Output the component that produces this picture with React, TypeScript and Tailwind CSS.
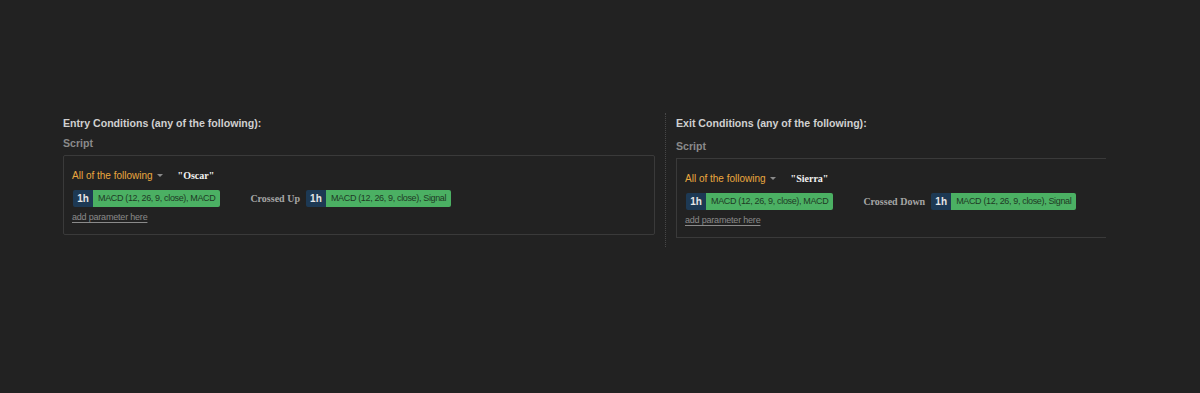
import React from "react"

type Side = {
  title: string
  name: string
  cross: string
  shift: boolean
  open: boolean
}

const Tag = ({ label }: { label: string }) => {
  return (
    <div className="flex h-[17px] items-stretch">
      <span className="flex w-[20px] items-center justify-center rounded-l-[2px] bg-[#1d3954] text-[10px] font-bold text-[#e6e6e6]">1h</span>
      <span className="flex items-center rounded-r-[2px] bg-[#4bb063] px-[5px] text-[9px] tracking-[-0.35px] text-[#1f3a25]">{label}</span>
    </div>
  )
}

const Conditions = ({ side }: { side: Side }) => {
  return (
    <div className={side.open ? "w-[430px]" : "w-[592px]"}>
      <div className="h-[14px] text-[10.6px] font-bold leading-[14px] text-[#d0d0d0]">{side.title}</div>
      <div className={"h-[14px] text-[10.6px] font-bold leading-[14px] text-[#8a8a8a] " + (side.shift ? "mt-[9px]" : "mt-[6px]")}>Script</div>
      <div className={"mt-[5px] border-[#3a3a3a] px-[8px] pb-[11px] pt-[12px] " + (side.open ? "border-y border-l" : "border rounded-[2px]")}>
        <div className="flex h-[14px] items-center">
          <span className="text-[10px] text-[#eaa83f]">All of the following</span>
          <span className="ml-[4px] mt-[1px] h-0 w-0 border-x-[3px] border-t-[3px] border-x-transparent border-t-[#8a8a8a]" />
          <span className="ml-[15px] font-['Liberation_Serif'] text-[10px] font-bold text-[#f2f2f2]">"{side.name}"</span>
        </div>
        <div className="ml-[1px] mt-[8px] flex items-center">
          <Tag label="MACD (12, 26, 9, close), MACD" />
          <span className="ml-[30px] font-['Liberation_Serif'] text-[10px] font-bold text-[#a6a6a6]">{side.cross}</span>
          <div className="ml-[6px]">
            <Tag label="MACD (12, 26, 9, close), Signal" />
          </div>
        </div>
        <div className="mt-[4px] h-[12px] text-[9px] leading-[12px] tracking-[-0.2px] text-[#8a8a8a] underline underline-offset-2">add parameter here</div>
      </div>
    </div>
  )
}

export default function App() {
  const entry: Side = { title: "Entry Conditions (any of the following):", name: "Oscar", cross: "Crossed Up", shift: false, open: false }
  const exit: Side = { title: "Exit Conditions (any of the following):", name: "Sierra", cross: "Crossed Down", shift: true, open: true }

  return (
    <div className="flex min-h-[393px] w-full items-start bg-[#222222] pl-[63px] pt-[116px] font-['Liberation_Sans',Arial,sans-serif]">
      <Conditions side={entry} />
      <div className="-mt-[3px] ml-[10px] mr-[10px] h-[134px] border-l border-dotted border-[#474747]" />
      <Conditions side={exit} />
    </div>
  )
}
